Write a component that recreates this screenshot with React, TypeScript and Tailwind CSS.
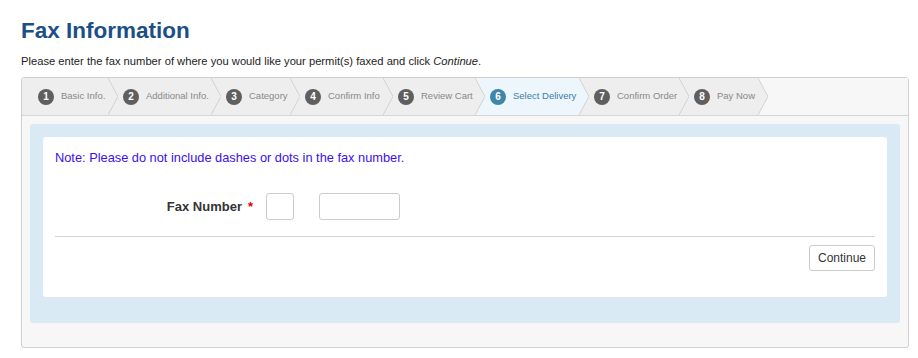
import React from "react";

type Step = { n: number; label: string; w: number };

const steps: Step[] = [
  { n: 1, label: "Basic Info.", w: 47 },
  { n: 2, label: "Additional Info.", w: 65 },
  { n: 3, label: "Category", w: 41 },
  { n: 4, label: "Confirm Info", w: 55 },
  { n: 5, label: "Review Cart", w: 54 },
  { n: 6, label: "Select Delivery", w: 66 },
  { n: 7, label: "Confirm Order", w: 62 },
  { n: 8, label: "Pay Now", w: 41 },
];

const ACTIVE = 6;
const STEP_BG = "#eeeeee";
const ACTIVE_BG = "#eef6fd";
const BAR_BG = "#f7f7f7";

function bgFor(n: number) {
  if (n > steps.length) return BAR_BG;
  return n === ACTIVE ? ACTIVE_BG : STEP_BG;
}

function Chevron({ left, right }: { left: string; right: string }) {
  return (
    <svg width="10" height="37" viewBox="0 0 10 37" className="block shrink-0">
      <rect x="0" y="0" width="10" height="37" fill={right} />
      <polygon points="0,0 10,18.5 0,37" fill={left} />
      <polyline points="0,0 10,18.5 0,37" fill="none" stroke="#d2d2d2" strokeWidth="1" />
    </svg>
  );
}

export default function App() {
  return (
    <div
      className="min-h-[358px] w-[918px] bg-white pl-[21px] pr-[9px] pt-[17px]"
      style={{ fontFamily: '"Liberation Sans", Arial, sans-serif' }}
    >
      <h1 className="text-[22.5px] font-bold leading-[28px] text-[#1b4f85]">Fax Information</h1>
      <p className="mt-[9px] text-[11.2px] leading-[15px] text-[#222]">
        Please enter the fax number of where you would like your permit(s) faxed and click{" "}
        <em>Continue</em>.
      </p>

      <div className="mt-[8px] h-[271px] rounded-[3px] border border-[#d0d0d0] bg-[#f7f7f7]">
        {/* Steps bar */}
        <div className="flex h-[38px] border-b border-[#d6d6d6] bg-[#f7f7f7]">
          {steps.map((s, i) => {
            const active = s.n === ACTIVE;
            return (
              <div
                key={s.n}
                className={`flex h-[37px] items-center ${i === 0 ? "pl-[16px]" : "pl-[5px]"}`}
                style={{ backgroundColor: bgFor(s.n) }}
              >
                <span
                  className={`flex h-[16px] w-[16px] shrink-0 items-center justify-center rounded-full text-[10px] font-bold text-white ${
                    active ? "bg-[#3d87a8]" : "bg-[#5f5f5f]"
                  }`}
                >
                  {s.n}
                </span>
                <span
                  className={`ml-[7px] whitespace-nowrap text-[9.5px] ${
                    active ? "text-[#3b7ca8]" : "text-[#888888]"
                  }`}
                  style={{ width: s.w }}
                >
                  {s.label}
                </span>
                <Chevron left={bgFor(s.n)} right={bgFor(s.n + 1)} />
              </div>
            );
          })}
        </div>

        {/* Blue region */}
        <div className="mx-[8px] mt-[8px] rounded-[3px] bg-[#d9eaf4] px-[13px] pb-[26px] pt-[13px]">
          <div className="h-[160px] rounded-[3px] bg-white px-[12px] pt-[12px]">
            <p className="text-[12.8px] leading-[17px] text-[#3a10f0]">
              Note: Please do not include dashes or dots in the fax number.
            </p>

            <div className="mt-[27px] flex h-[27px] items-center">
              <label className="w-[187px] text-right text-[13px] font-bold text-[#333]">
                Fax Number
              </label>
              <span className="ml-[6px] w-[6px] text-[13px] font-bold text-[#e00000]">*</span>
              <input
                type="text"
                className="ml-[12px] h-[27px] w-[28px] rounded-[3px] border border-[#cccccc] bg-white"
              />
              <input
                type="text"
                className="ml-[25px] h-[27px] w-[81px] rounded-[3px] border border-[#cccccc] bg-white"
              />
            </div>

            <div className="mt-[16px] border-t border-[#d5d0e2]" />

            <div className="mt-[8px] flex justify-end">
              <button className="h-[26px] w-[66px] rounded-[3px] border border-[#cccccc] bg-white text-[12px] text-[#333]">
                Continue
              </button>
            </div>
          </div>
        </div>
      </div>
    </div>
  );
}
